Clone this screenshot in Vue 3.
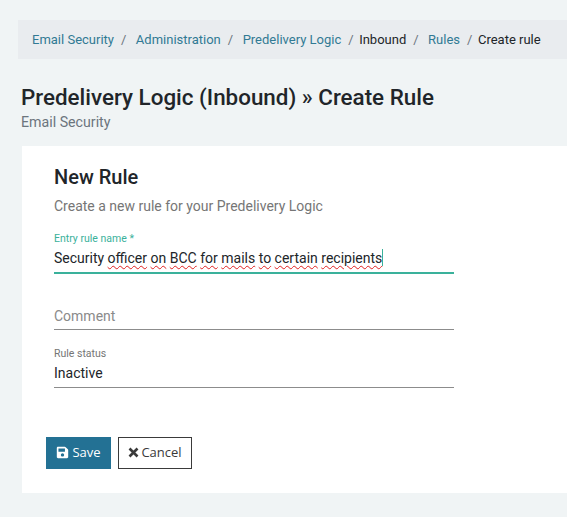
<script setup>
const crumbs = [
  { text: 'Email Security', link: true, nextLink: true },
  { text: 'Administration', link: true, nextLink: true },
  { text: 'Predelivery Logic', link: true, nextLink: false },
  { text: 'Inbound', link: false, nextLink: true },
  { text: 'Rules', link: true, nextLink: false },
  { text: 'Create rule', link: false, last: true }
]
const flagged = ['officer', 'on', 'BCC', 'for', 'mails', 'to', 'certain', 'recipients']
</script>

<template>
  <div class="page">
    <nav class="crumbs">
      <template v-for="c in crumbs" :key="c.text">
        <span :class="c.link ? 'link' : 'plain'">{{ c.text }}</span>
        <span v-if="!c.last" class="sep" :class="{ wide: c.nextLink }">/</span>
      </template>
    </nav>
    <header class="head">
      <h1>Predelivery Logic (Inbound) » Create Rule</h1>
      <p>Email Security</p>
    </header>
    <section class="card">
      <h2>New Rule</h2>
      <p class="sub">Create a new rule for your Predelivery Logic</p>
      <div class="field active">
        <label>Entry rule name *</label>
        <div class="value">Security <template v-for="(w, i) in flagged" :key="w"><span class="sq">{{ w }}</span>{{ i < flagged.length - 1 ? ' ' : '' }}</template><span class="caret"></span></div>
      </div>
      <div class="field comment">
        <div class="placeholder">Comment</div>
      </div>
      <div class="field status">
        <label>Rule status</label>
        <div class="value">Inactive</div>
      </div>
      <div class="actions">
        <button class="btn save">
          <svg width="13" height="13" viewBox="0 0 448 512"><path fill="#fff" d="M433.9 129.9l-83.9-83.9A48 48 0 0 0 316.1 32H48C21.5 32 0 53.5 0 80v352c0 26.5 21.5 48 48 48h352c26.5 0 48-21.5 48-48V163.9a48 48 0 0 0-14.1-34zM224 416c-35.3 0-64-28.7-64-64 0-35.3 28.7-64 64-64s64 28.7 64 64c0 35.3-28.7 64-64 64zm96-304.5V212c0 6.6-5.4 12-12 12H76c-6.6 0-12-5.4-12-12V108c0-6.6 5.4-12 12-12h228.5c3.2 0 6.2 1.3 8.5 3.5l3.5 3.5c2.3 2.3 3.5 5.3 3.5 8.5z"/></svg>
          Save
        </button>
        <button class="btn cancel">
          <svg width="11" height="11" viewBox="0 0 11 11"><path d="M1.5 1.5l8 8M9.5 1.5l-8 8" stroke="#3a3a3a" stroke-width="2.6" fill="none"/></svg>
          Cancel
        </button>
      </div>
    </section>
  </div>
</template>

<style>
html, body { margin: 0; padding: 0; background: #f0f4f5; overflow: hidden; }
</style>

<style scoped>
.page {
  width: 567px;
  height: 517px;
  overflow: hidden;
  box-sizing: border-box;
  padding-top: 20px;
  font-family: Roboto, sans-serif;
  color: #212529;
  background: #f0f4f5;
}
.crumbs {
  margin-left: 18px;
  height: 39px;
  background: #e9ecef;
  display: flex;
  align-items: center;
  padding-left: 14px;
  font-size: 13px;
  white-space: nowrap;
}
.link { color: #317a94; }
.plain { color: #212529; }
.sep { color: #6c757d; margin: 0 5.5px 0 7px; }
.sep.wide { margin-right: 9.5px; }
.head { margin: 25px 0 0 21px; }
h1 {
  margin: 0;
  font-size: 22.4px;
  line-height: 26px;
  font-weight: 500;
  color: #212529;
}
.head p { margin: 4px 0 0; font-size: 14.2px; line-height: 16px; color: #6c757d; }
.card {
  margin: 16px 0 0 22px;
  height: 347px;
  background: #fff;
  box-sizing: border-box;
  padding: 20px 0 0 32px;
}
h2 { margin: 0; font-size: 20px; line-height: 22px; font-weight: 500; color: #212529; }
.sub { margin: 9px 0 0; font-size: 14px; line-height: 18px; color: #767676; }
.field { width: 400px; border-bottom: 1px solid #8c8c8c; box-sizing: border-box; }
.field label { display: block; font-size: 10.5px; line-height: 12px; color: #757575; }
.value { position: relative; font-size: 14px; line-height: 18px; color: #212529; white-space: nowrap; }
.active { margin-top: 18px; height: 41px; border-bottom: 2px solid #3ab19b; }
.active label { color: #3ab19b; }
.active .value { margin-top: 4px; }
.sq { text-decoration: underline wavy #e02020 1px; text-underline-offset: 2px; }
.caret { display: inline-block; width: 1px; height: 17px; background: #3ab19b; vertical-align: top; }
.comment { margin-top: 33px; height: 23px; }
.placeholder { font-size: 14px; line-height: 18px; color: #8a8a8a; }
.status { margin-top: 18px; height: 40px; }
.status .value { margin-top: 4px; }
.actions { display: flex; gap: 7px; margin: 49px 0 0 -8px; }
.btn {
  height: 32px;
  box-sizing: border-box;
  display: flex;
  align-items: center;
  justify-content: center;
  gap: 3px;
  font-family: "Open Sans", sans-serif;
  font-size: 13px;
  line-height: 16px;
  border-radius: 0;
  padding: 0 0 2px;
}
.save { width: 65px; background: #237194; color: #fff; border: 1px solid #237194; }
.cancel { width: 74px; gap: 2px; background: #fff; color: #3a3a3a; border: 1px solid #3a3a3a; }
</style>
